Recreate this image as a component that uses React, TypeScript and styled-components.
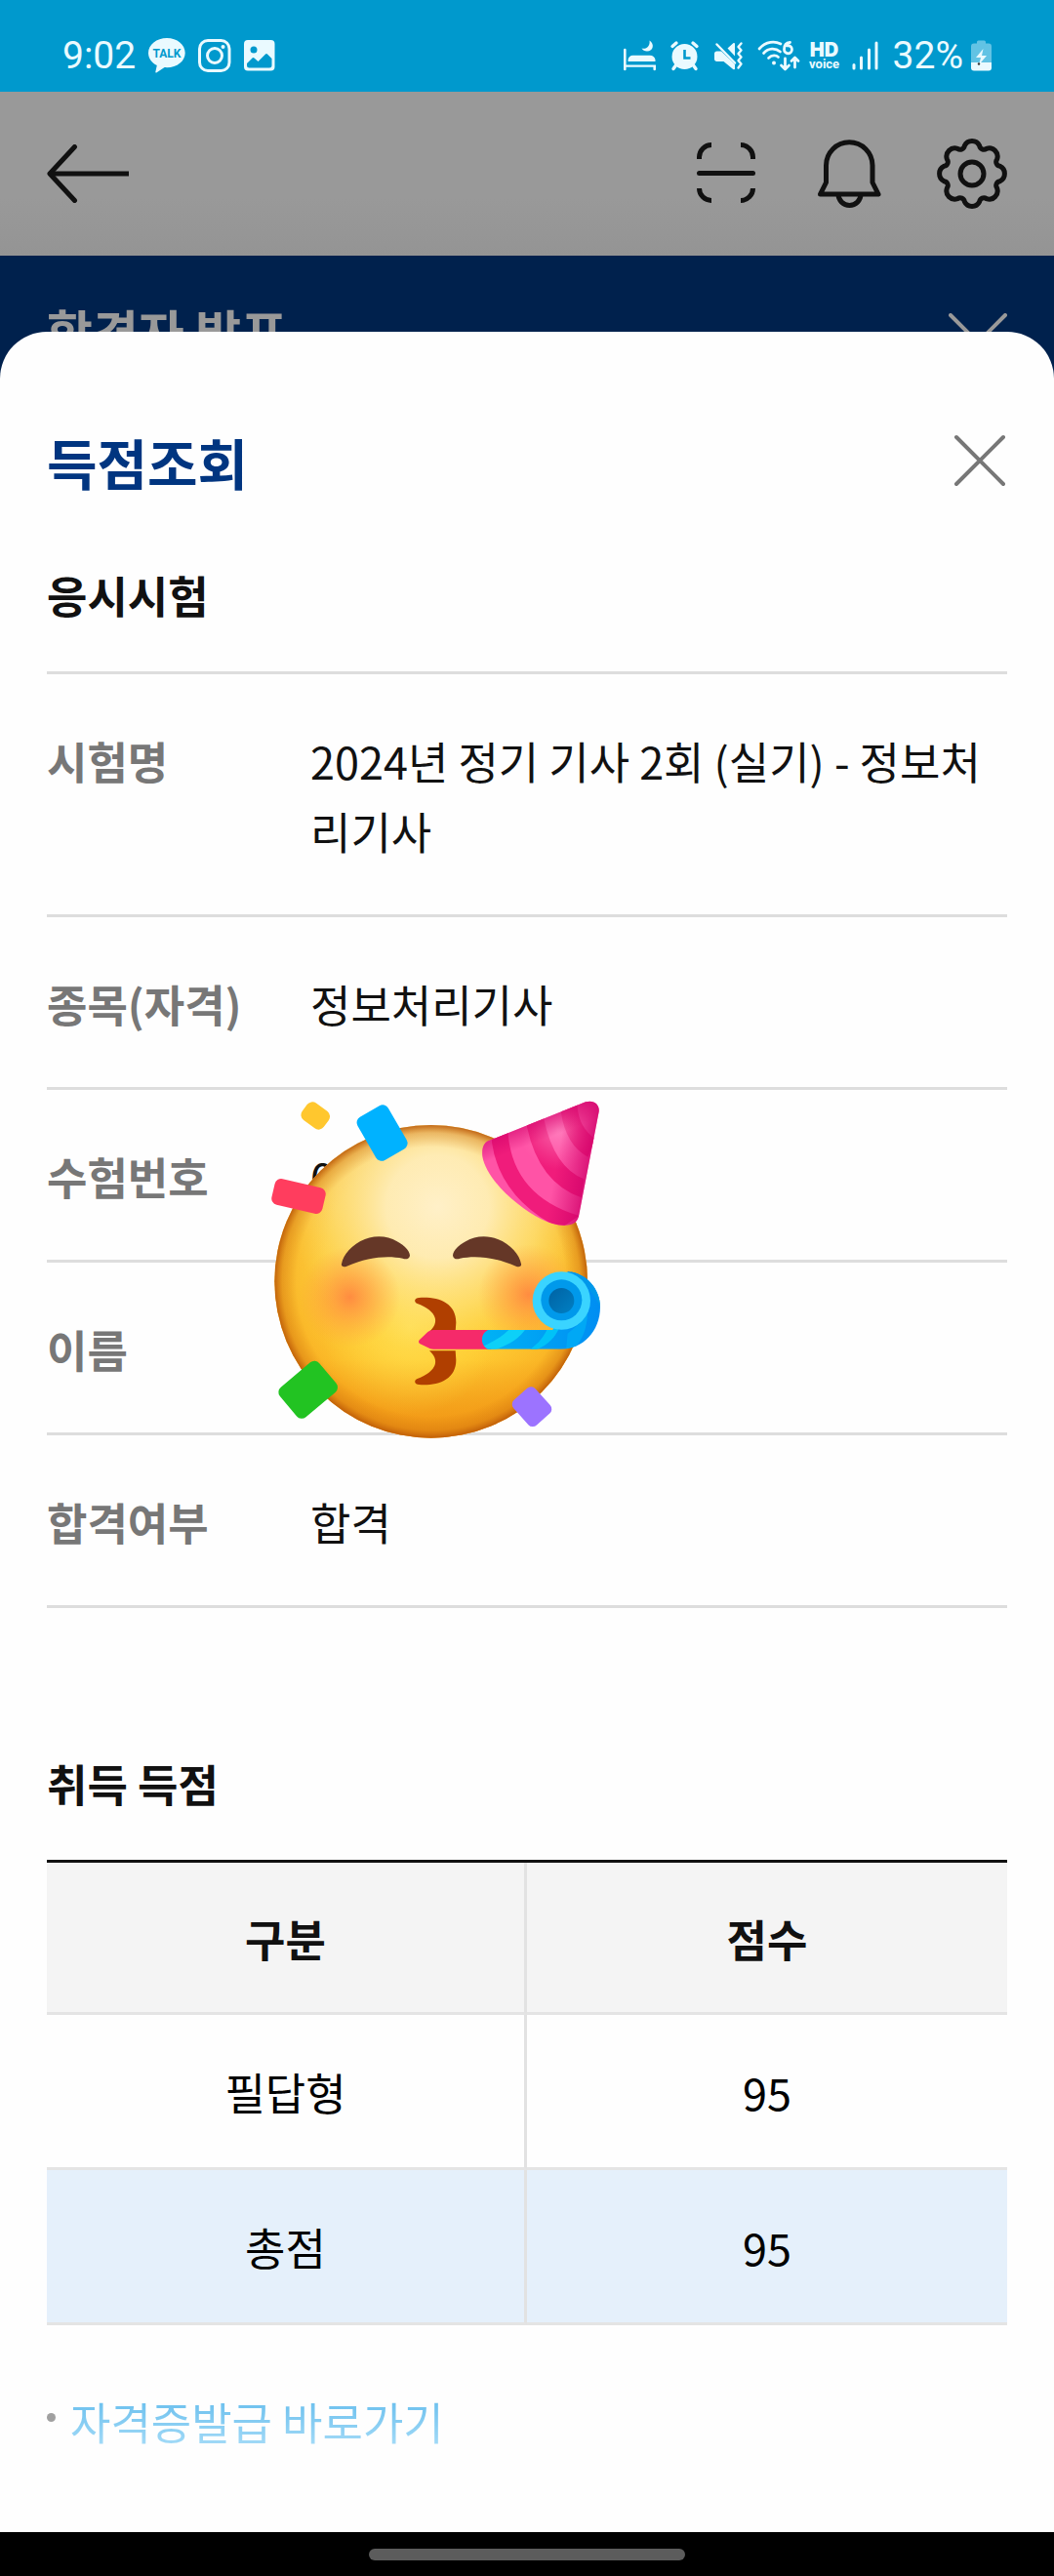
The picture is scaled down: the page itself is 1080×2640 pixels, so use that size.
import React from "react";
import styled, { createGlobalStyle } from "styled-components";

const GlobalStyle = createGlobalStyle`
  *, *::before, *::after { box-sizing: border-box; }
  body {
    margin: 0;
    background: #fefefe;
    color: #111;
    font-family: "Noto Sans CJK KR", "Noto Sans", sans-serif;
  }
  h1, h2, p, dl, dd, ul { margin: 0; padding: 0; }
`;

const Page = styled.div`
  display: flex;
  flex-direction: column;
  min-height: 100vh;
`;

const StatusBar = styled.header`
  display: flex;
  align-items: center;
  justify-content: space-between;
  height: 94px;
  padding: 20px 64px 0;
  background: #0099cd;
  color: #eafaff;
  font-family: Roboto, sans-serif;
  font-size: 39px;
  line-height: 40px;
`;

const StatusGroup = styled.div<{ $gap: number }>`
  display: flex;
  align-items: center;
  gap: ${(p) => p.$gap}px;

  svg { display: block; }
`;

const StatusText = styled.span`
  font-weight: 400;
`;

const HdVoice = styled.span`
  display: flex;
  flex-direction: column;
  align-items: center;
  width: 34px;
  font-size: 13px;
  font-weight: 700;
  line-height: 12px;

  b {
    font-family: Inter, sans-serif;
    font-size: 20px;
    line-height: 18px;
  }
`;

const AppBar = styled.nav`
  display: flex;
  align-items: center;
  justify-content: space-between;
  height: 168px;
  padding: 0 48px;
  background: linear-gradient(#999 65%, #949494);
`;

const AppActions = styled.div`
  display: flex;
  gap: 54px;
`;

const IconButton = styled.button`
  display: flex;
  padding: 0;
  border: 0;
  background: none;
  color: inherit;

  svg {
    display: block;
    fill: none;
    stroke: currentColor;
    stroke-width: 5;
    stroke-linecap: round;
    stroke-linejoin: round;
  }
`;

const Hero = styled.section`
  display: flex;
  align-items: flex-start;
  justify-content: space-between;
  height: 126px;
  padding: 36px 48px 0;
  overflow: hidden;
  background: #00214d;
  color: #999;
`;

const HeroTitle = styled.h1`
  font-size: 51px;
  font-weight: 700;
  line-height: 82px;
`;

const HeroClose = styled(IconButton)`
  margin-top: 23px;
`;

const Sheet = styled.main`
  position: relative;
  flex: 1;
  margin-top: -48px;
  padding: 90px 48px 76px;
  border-radius: 48px 48px 0 0;
  background: #fefefe;
`;

const SheetHeader = styled.div`
  display: flex;
  align-items: flex-start;
  justify-content: space-between;
  margin-bottom: 60px;
  padding-top: 2px;
  color: #777;

  button { margin-top: 12px; }
`;

const SheetTitle = styled.h1`
  color: #003580;
  font-size: 56px;
  font-weight: 700;
  line-height: 82px;
`;

const SectionTitle = styled.h2`
  margin-bottom: 42px;
  font-size: 45px;
  font-weight: 700;
  line-height: 72px;
`;

const Details = styled.dl`
  margin-bottom: 144px;
  border-top: 3px solid #ddd;
  font-size: 45px;
  line-height: 72px;
`;

const DetailRow = styled.div`
  position: relative;
  display: grid;
  grid-template-columns: 270px 1fr;
  padding: 53px 0 49px;
  border-bottom: 3px solid #ddd;
`;

const Term = styled.dt`
  color: #777;
  font-weight: 700;
`;

const Sticker = styled.svg`
  position: absolute;
  top: 10px;
  left: 229px;
  z-index: 1;
`;

const ScoreTable = styled.table`
  width: 100%;
  margin-bottom: 63px;
  border-collapse: separate;
  border-spacing: 0;
  border-top: 3px solid #111;
  table-layout: fixed;
  font-size: 45px;
  line-height: 72px;
  color: #000;
  text-align: center;

  th, td {
    padding: 2px 0 0;
    border-bottom: 3px solid #e4e4e4;
  }
  th:first-child, td:first-child {
    width: calc(50% + 2px);
    border-right: 3px solid #e2e2e2;
  }
  th {
    height: 156px;
    background: #f4f4f4;
    color: #111;
    font-weight: 700;
  }
  td { height: 159px; }
`;

const ScoreRow = styled.tr<{ $total: boolean }>`
  background: ${(p) => (p.$total ? "#e5f0fb" : "transparent")};
`;

const LinkList = styled.ul`
  list-style: none;
  font-size: 45px;
  line-height: 72px;
`;

const LinkItem = styled.li`
  display: flex;
  gap: 15px;

  &::before {
    content: "";
    width: 9px;
    height: 9px;
    margin-top: 27px;
    border-radius: 50%;
    background: #a0a0a0;
  }
`;

const GradientLink = styled.a`
  background: linear-gradient(#6cc0ee 20%, #a8ddf8 90%);
  background-clip: text;
  -webkit-background-clip: text;
  color: transparent;
  text-decoration: none;
`;

const SystemBar = styled.footer`
  display: flex;
  justify-content: center;
  height: 45px;
  padding-top: 17px;
  background: #000;
`;

const HomePill = styled.span`
  width: 30%;
  height: 12px;
  border-radius: 6px;
  background: #5c5c5c;
`;

const TalkIcon = () => (
  <svg width="38" height="36" viewBox="0 0 38 36" fill="currentColor">
    <path d="M19 0C8.500 0 0 6.800 0 15.200c0 5.400 3.500 10.100 8.800 12.800L7.300 34.800c-.1.700.4 1 1 .6l8.300-5.300c.8.100 1.600.1 2.400.1 10.500 0 18.700-6.700 18.700-15S29.500 0 19 0Z" />
    <text x="19" y="20" textAnchor="middle" fontFamily="Roboto" fontWeight="700" fontSize="12" fill="#0099cd">TALK</text>
  </svg>
);

const InstaIcon = () => (
  <svg width="34" height="34" viewBox="0 0 34 34" fill="none" stroke="currentColor" strokeWidth="3">
    <rect x="1.500" y="1.500" width="30.500" height="31" rx="8.500" />
    <circle cx="17" cy="17" r="7.500" />
    <circle cx="25.500" cy="8" r="2" fill="currentColor" stroke="none" />
  </svg>
);

const GalleryIcon = () => (
  <svg width="32" height="32" viewBox="0 0 32 32" fill="currentColor">
    <path fillRule="evenodd" d="M4 0h23.500a4 4 0 0 1 4 4v23.500a4 4 0 0 1-4 4H4a4 4 0 0 1-4-4V4a4 4 0 0 1 4-4Zm6 6.500a3.500 3.500 0 1 0 0 7 3.500 3.500 0 0 0 0-7ZM3 24v2a2.500 2.500 0 0 0 2.500 2.500h20.500a2.500 2.500 0 0 0 2.500-2.500V19l-4.500-4.500a1.500 1.500 0 0 0-2 0L14.500 22 10.500 18.500a1.500 1.500 0 0 0-2 0Z" />
  </svg>
);

const BedIcon = () => (
  <svg width="40" height="32" viewBox="0 0 40 32" fill="currentColor">
    <path d="M3 10a1.300 1.300 0 0 1 2.600 0v15.500h30.400V30a1.300 1.300 0 0 1-2.600 0v-2.200H5.600V30A1.300 1.300 0 0 1 3 30ZM7.500 22v-1.200a5 5 0 0 1 5-5H30a6 6 0 0 1 5.500 4.500V22Z" />
    <path d="M29.500.5c5.500 3.500 4 11-2.500 11-2.400 0-4.500-1.200-5.500-3 4.500 1.500 9-2 8-8Z" />
  </svg>
);

const AlarmIcon = () => (
  <svg width="36" height="32" viewBox="0 0 36 32" fill="currentColor">
    <circle cx="17.500" cy="17" r="13" />
    <path d="m5 6.500 4-3.500M30 6.500 26 3M8.500 26 6 29.500M26.500 26 29 29.500" stroke="currentColor" strokeWidth="3.400" strokeLinecap="round" />
    <path d="M17.500 10v8.500h6" fill="none" stroke="#0099cd" strokeWidth="2.600" />
  </svg>
);

const MuteIcon = () => (
  <svg width="38" height="32" viewBox="0 0 38 32" fill="currentColor">
    <path d="M4 14c0-1.500 1-2.500 2.500-2.500h4.500l14 13.500v4.500c0 1-1 1-1.800.4L13.500 22H6.500C5 22 4 21 4 19.500ZM25 16.500 17.500 8.500l5.800-5.200c.8-.6 1.700-.4 1.700.6Z" />
    <path d="M6.500 4.500 25 23.500" stroke="currentColor" strokeWidth="2.500" strokeLinecap="round" />
    <path d="M31.500 3.500 28.500 7l3 3.500-3 3.500 3 3.500-3 3.500 3 3.500-3 4" fill="none" stroke="currentColor" strokeWidth="2.400" strokeLinecap="round" strokeLinejoin="round" />
  </svg>
);

const WifiIcon = () => (
  <svg width="46" height="32" viewBox="0 0 46 32" fill="none" stroke="currentColor" strokeWidth="2.700" strokeLinecap="round" strokeLinejoin="round">
    <path d="M4 9C11 1 20 1 26 4M8.500 13.500c5-5.500 12-5.500 17-1.500M13.500 18.500c3.500-3.500 8-3 10-1" />
    <circle cx="19" cy="23.500" r="2" fill="currentColor" stroke="none" />
    <path d="M35.500 2.500C31.500 3 29.500 6 29.500 9.500a4 4 0 1 0 3-3.600M30.500 19v10M26.500 26l4 4 4-4M40.500 28V18.500M37 21.500l3.500-3.500 3.500 3.500" strokeWidth="2.800" />
  </svg>
);

const SignalIcon = () => (
  <svg width="37" height="32" viewBox="0 0 37 32" stroke="currentColor" strokeWidth="3" strokeLinecap="round">
    <path d="M5 25.500v3.500M12.500 18v11M20.500 10v19M28 3v26" />
  </svg>
);

const BatteryIcon = () => (
  <svg width="21" height="32" viewBox="0 0 21 32">
    <path d="M6 3.500V2a1.500 1.500 0 0 1 1.500-1.500h6A1.500 1.500 0 0 1 15 2v1.500h3a3 3 0 0 1 3 3V23H0V6.500a3 3 0 0 1 3-3Z" fill="#62c3e4" />
    <path d="M0 23h21v5.500a3 3 0 0 1-3 3H3a3 3 0 0 1-3-3Z" fill="#eafaff" />
    <path d="M12.500 9 5 18h5l-2 7.500L16 16h-5Z" fill="#eafaff" />
    <circle cx="8" cy="24.500" r="1.200" fill="#333" />
  </svg>
);

const BackIcon = () => (
  <svg width="84" height="60" viewBox="0 0 84 60" aria-hidden>
    <path d="M28.500 2.500 3 30l25.500 27.500" />
    <path d="M3 30h81" strokeLinecap="butt" />
  </svg>
);

const ScanIcon = () => (
  <svg width="72" height="72" viewBox="0 0 72 72" aria-hidden>
    <path d="M8.500 21v-2a12.500 12.500 0 0 1 12.500-12.500M51 6.500a12.500 12.500 0 0 1 12.500 12.500v2M63.500 51a12.500 12.500 0 0 1-12.500 12.500M21 63.500A12.500 12.500 0 0 1 8.500 51" strokeLinecap="butt" />
    <path d="M8.500 35.500h55" />
  </svg>
);

const BellIcon = () => (
  <svg width="72" height="72" viewBox="0 0 72 72" aria-hidden>
    <path d="M6.500 57 12.500 45V27.500a23.700 23.700 0 0 1 47.500 0V45l6 12ZM25 57a11.500 11.500 0 0 0 23 0" />
  </svg>
);

/* Eight convex lobes joined by small concave arcs. */
const gearOutline = (() => {
  const at = (deg: number) => {
    const a = (deg * Math.PI) / 180;
    return `${(36 + 29.6 * Math.cos(a)).toFixed(2)} ${(36 + 29.6 * Math.sin(a)).toFixed(2)}`;
  };
  let d = `M${at(-15)}`;
  for (let k = 0; k < 8; k += 1) {
    d += `A8.500 8.500 0 0 1 ${at(k * 45 + 15)}A4.500 4.500 0 0 0 ${at(k * 45 + 30)}`;
  }
  return `${d}Z`;
})();

const GearIcon = () => (
  <svg width="72" height="72" viewBox="0 0 72 72" aria-hidden>
    <path d={gearOutline} />
    <circle cx="36" cy="36" r="12" />
  </svg>
);

const CloseIcon = ({ size, inset }: { size: number; inset: number }) => {
  const far = size - inset;
  return (
    <svg width={size} height={size} viewBox={`0 0 ${size} ${size}`} aria-hidden>
      <path d={`M${inset} ${inset} ${far} ${far}M${far} ${inset} ${inset} ${far}`} strokeWidth="4" />
    </svg>
  );
};

const Eye = () => (
  <path d="M270 586C276 548 325 502 385 502c52 0 95 38 95 58-2 11-12 13-22 9-48-10-108-4-172 24-10 4-18 1-16-7Z" fill="#653727" />
);

const Lip = () => (
  <path d="M508 690C565 686 622 704 622 766L620 794H540C570 768 568 732 501 707 492 702 494 691 508 690Z" fill="#b03f00" />
);

const PartyFace = () => (
  <Sticker width="339" height="348" viewBox="51 81 1017 1044" role="img" aria-label="파티 얼굴">
    <defs>
      <linearGradient id="skin" x1="0" y1="0" x2="0" y2="1">
        <stop offset="0" stopColor="#f7cd70" />
        <stop offset=".35" stopColor="#fcca3c" />
        <stop offset=".75" stopColor="#ffcc33" />
        <stop offset="1" stopColor="#ee8d12" />
      </linearGradient>
      <radialGradient id="sideShade" gradientUnits="userSpaceOnUse" cx="545" cy="560" r="580">
        <stop offset=".55" stopColor="#f7a51c" stopOpacity="0" />
        <stop offset=".95" stopColor="#f39a15" stopOpacity=".75" />
      </radialGradient>
      <radialGradient id="glow" gradientUnits="userSpaceOnUse" cx="565" cy="410" r="450">
        <stop offset="0" stopColor="#fff0c8" />
        <stop offset=".35" stopColor="#ffeebb" stopOpacity=".92" />
        <stop offset=".7" stopColor="#ffe78c" stopOpacity=".5" />
        <stop offset="1" stopColor="#ffdf60" stopOpacity="0" />
      </radialGradient>
      <radialGradient id="lowGlow" gradientUnits="userSpaceOnUse" cx="480" cy="780" r="270">
        <stop offset="0" stopColor="#ffe055" stopOpacity=".9" />
        <stop offset="1" stopColor="#ffd83d" stopOpacity="0" />
      </radialGradient>
      <radialGradient id="rim">
        <stop offset=".86" stopColor="#c96a0c" stopOpacity="0" />
        <stop offset=".95" stopColor="#c96a0c" stopOpacity=".35" />
        <stop offset="1" stopColor="#b85506" stopOpacity=".85" />
      </radialGradient>
      <radialGradient id="blush">
        <stop offset="0" stopColor="#ff8840" stopOpacity=".95" />
        <stop offset=".4" stopColor="#ff9440" stopOpacity=".6" />
        <stop offset="1" stopColor="#ffa040" stopOpacity="0" />
      </radialGradient>
      <radialGradient id="hatLight" gradientUnits="userSpaceOnUse" cx="275" cy="115" r="120">
        <stop offset="0" stopColor="#ff9fcf" stopOpacity=".55" />
        <stop offset="1" stopColor="#ff80bd" stopOpacity="0" />
      </radialGradient>
      <linearGradient id="hatShade" gradientUnits="userSpaceOnUse" x1="270" y1="220" x2="380" y2="240">
        <stop offset="0" stopColor="#cf0069" stopOpacity="0" />
        <stop offset="1" stopColor="#cf0069" stopOpacity=".85" />
      </linearGradient>
      <linearGradient id="hatTop" gradientUnits="userSpaceOnUse" x1="205" y1="85" x2="228" y2="145">
        <stop offset="0" stopColor="#cf0069" stopOpacity=".6" />
        <stop offset="1" stopColor="#cf0069" stopOpacity="0" />
      </linearGradient>
      <linearGradient id="horn" x1="0" y1="0" x2="1" y2="0">
        <stop offset="0" stopColor="#00b4f5" />
        <stop offset="1" stopColor="#008cf2" />
      </linearGradient>
      <linearGradient id="hole" x1="0" y1="0" x2="1" y2="1">
        <stop offset="0" stopColor="#0062a3" />
        <stop offset="1" stopColor="#0080c4" />
      </linearGradient>
      <clipPath id="hatClip">
        <path d="M68 145 360 28C385 20 404 36 401 58L340 374C337 396 322 407 295 407 250 408 200 380 150 340 95 297 50 240 43 195 40 165 50 150 68 145Z" />
      </clipPath>
      <clipPath id="hornClip">
        <path d="M720 789H920L965 609C1025 614 1065 665 1065 718 1065 795 1010 848 945 848H720C695 835 696 802 720 789Z" />
      </clipPath>
    </defs>
    <circle cx="545" cy="640" r="481" fill="url(#skin)" />
    <circle cx="545" cy="640" r="481" fill="url(#sideShade)" />
    <circle cx="545" cy="640" r="481" fill="url(#lowGlow)" />
    <circle cx="545" cy="640" r="481" fill="url(#glow)" />
    <circle cx="545" cy="640" r="481" fill="url(#rim)" />
    <circle cx="295" cy="688" r="155" fill="url(#blush)" />
    <circle cx="845" cy="680" r="155" fill="url(#blush)" />
    <Eye />
    <g transform="translate(1092 0) scale(-1 1)"><Eye /></g>
    <Lip />
    <g transform="translate(0 1647) scale(1 -1)"><Lip /></g>
    <path d="M510 819 535 795Q542 789 552 789H730V848H552Q542 848 535 843L510 831Q504 825 510 819Z" fill="#f52a6a" />
    <g clipPath="url(#hornClip)">
      <path d="M690 600h390v260H690Z" fill="url(#horn)" />
      <path d="M722 856C775 840 815 820 840 780H792C765 810 735 825 705 840Z" fill="#0dd0f8" />
      <path d="M862 852C905 835 925 815 940 780H905C890 815 875 830 845 852Z" fill="#00c2f8" />
      <path d="M985 846C1010 820 1028 780 1026 720L1000 770 965 800 960 852Z" fill="#00a8f5" />
      <path d="M960 600C1010 630 1050 680 1070 730V640L1000 590Z" fill="#0098ea" />
    </g>
    <circle cx="946" cy="699" r="89" fill="#3ad4ff" />
    <circle cx="946" cy="697" r="63" fill="#0099eb" />
    <circle cx="946" cy="699" r="39" fill="url(#hole)" />
    <g transform="translate(660 60)" clipPath="url(#hatClip)">
      <path d="M30 10h380v410H30Z" fill="#ff53a6" />
      <path d="M72 152Q94 308 250 400L290 412 340 378Q139 317 122 128L122 100H72ZM180 105Q217 277 347 322L355 265Q263 228 232 80L230 60H180ZM285 62Q300 160 367 197L390 142Q339 106 335 42V20H285Z" fill="#f01c7b" />
      <path d="M30 10h380v410H30Z" fill="url(#hatLight)" />
      <path d="M30 10h380v410H30Z" fill="url(#hatShade)" />
      <path d="M30 10h380v410H30Z" fill="url(#hatTop)" />
    </g>
    <rect x="149" y="98" width="82" height="65" rx="20" fill="#ffc72e" transform="rotate(36 190 130)" />
    <rect x="340" y="107" width="109" height="153" rx="20" fill="#00b2ff" transform="rotate(-30 394 183)" />
    <rect x="58" y="337" width="160" height="82" rx="20" fill="#ff3d5e" transform="rotate(13 138 378)" />
    <rect x="88" y="913" width="158" height="120" rx="20" fill="#22c322" transform="rotate(-40 167 973)" />
    <rect x="803" y="980" width="104" height="90" rx="18" fill="#9c73ff" transform="rotate(48 855 1025)" />
  </Sticker>
);

const details: { term: string; value: string; sticker?: boolean }[] = [
  { term: "시험명", value: "2024년 정기 기사 2회 (실기) - 정보처리기사" },
  { term: "종목(자격)", value: "정보처리기사" },
  { term: "수험번호", value: "0", sticker: true },
  { term: "이름", value: "" },
  { term: "합격여부", value: "합격" },
];

const scores = [
  { label: "필답형", score: 95, total: false },
  { label: "총점", score: 95, total: true },
];

export default function App() {
  return (
    <Page>
      <GlobalStyle />
      <StatusBar>
        <StatusGroup $gap={13}>
          <StatusText>9:02</StatusText>
          <TalkIcon />
          <InstaIcon />
          <GalleryIcon />
        </StatusGroup>
        <StatusGroup $gap={8}>
          <BedIcon />
          <AlarmIcon />
          <MuteIcon />
          <WifiIcon />
          <HdVoice><b>HD</b>voice</HdVoice>
          <SignalIcon />
          <StatusText>32%</StatusText>
          <BatteryIcon />
        </StatusGroup>
      </StatusBar>
      <AppBar>
        <IconButton type="button" aria-label="뒤로"><BackIcon /></IconButton>
        <AppActions>
          <IconButton type="button" aria-label="스캔"><ScanIcon /></IconButton>
          <IconButton type="button" aria-label="알림"><BellIcon /></IconButton>
          <IconButton type="button" aria-label="설정"><GearIcon /></IconButton>
        </AppActions>
      </AppBar>
      <Hero>
        <HeroTitle>합격자 발표</HeroTitle>
        <HeroClose type="button" aria-label="닫기"><CloseIcon size={60} inset={2} /></HeroClose>
      </Hero>
      <Sheet>
        <SheetHeader>
          <SheetTitle>득점조회</SheetTitle>
          <IconButton type="button" aria-label="득점조회 닫기"><CloseIcon size={56} inset={4} /></IconButton>
        </SheetHeader>
        <SectionTitle>응시시험</SectionTitle>
        <Details>
          {details.map((d) => (
            <DetailRow key={d.term}>
              <Term>{d.term}</Term>
              <dd>{d.value}</dd>
              {d.sticker && <PartyFace />}
            </DetailRow>
          ))}
        </Details>
        <SectionTitle>취득 득점</SectionTitle>
        <ScoreTable>
          <thead>
            <tr><th scope="col">구분</th><th scope="col">점수</th></tr>
          </thead>
          <tbody>
            {scores.map((s) => (
              <ScoreRow key={s.label} $total={s.total}>
                <td>{s.label}</td>
                <td>{s.score}</td>
              </ScoreRow>
            ))}
          </tbody>
        </ScoreTable>
        <LinkList>
          <LinkItem><GradientLink href="#certificate">자격증발급 바로가기</GradientLink></LinkItem>
        </LinkList>
      </Sheet>
      <SystemBar><HomePill /></SystemBar>
    </Page>
  );
}
